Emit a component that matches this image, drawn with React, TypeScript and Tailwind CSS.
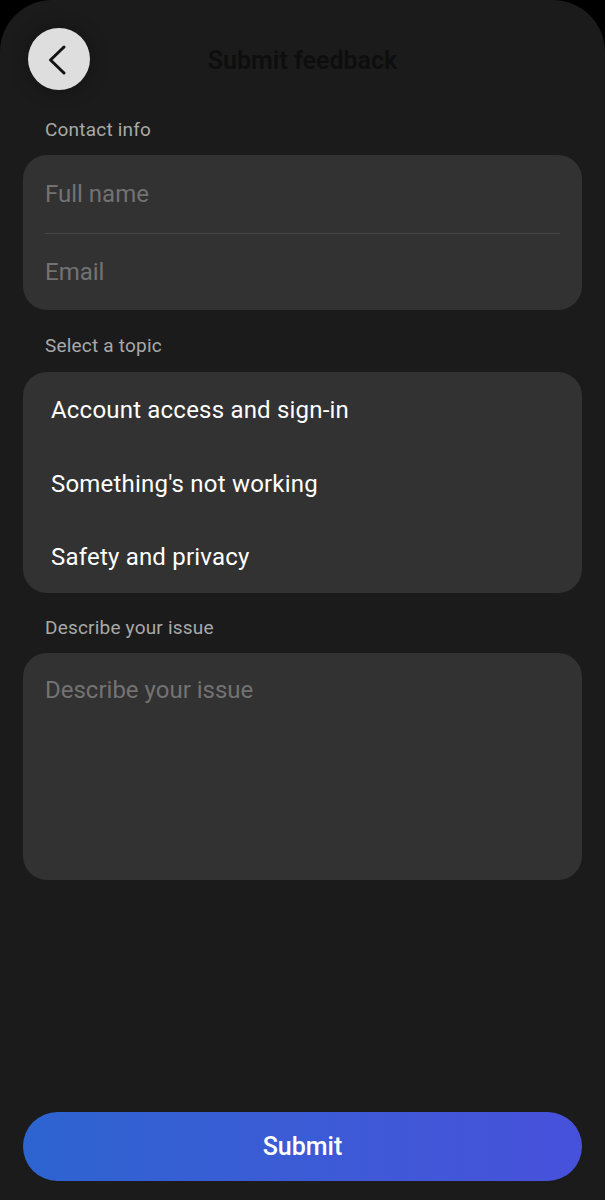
const topics = [
  "Account access and sign-in",
  "Something's not working",
  "Safety and privacy",
];

function SectionLabel({ children }: { children: React.ReactNode }) {
  return (
    <div className="px-[45px] text-[19px] leading-[20px] tracking-[0.2px] text-[#a9a9a9]">
      {children}
    </div>
  );
}

export default function App() {
  return (
    <div
      className="min-h-[1200px] w-[605px] bg-black"
      style={{ fontFamily: "Roboto, 'Noto Sans', sans-serif" }}
    >
      <div className="flex h-[1200px] flex-col rounded-t-[52px] bg-[#1b1b1b]">
        {/* header */}
        <div className="relative flex h-[120px] items-center justify-center">
          <button
            type="button"
            className="absolute left-[28px] top-[28px] flex h-[62px] w-[62px] items-center justify-center rounded-full bg-[#dedede] shadow-[0_0_18px_rgba(0,0,0,0.35)]"
          >
            <svg width="62" height="62" viewBox="0 0 62 62" fill="none">
              <polyline
                points="36,19 22.5,32 36,45"
                stroke="#121212"
                strokeWidth="3"
                strokeLinecap="round"
                strokeLinejoin="round"
              />
            </svg>
          </button>
          <h1 className="text-[25px] font-semibold leading-none text-[#0e0e0e]">
            Submit feedback
          </h1>
        </div>

        {/* contact info */}
        <SectionLabel>Contact info</SectionLabel>
        <div className="mx-[23px] mt-[15px] rounded-[24px] bg-[#323232]">
          <div className="flex h-[78px] items-center px-[22px] text-[24px] text-[#727272]">
            Full name
          </div>
          <div className="mx-[22px] h-px bg-[#474747]" />
          <div className="flex h-[76px] items-center px-[22px] text-[24px] text-[#727272]">
            Email
          </div>
        </div>

        {/* topic */}
        <div className="mt-[26px]">
          <SectionLabel>Select a topic</SectionLabel>
        </div>
        <div className="mx-[23px] mt-[16px] flex h-[221px] flex-col justify-center rounded-[24px] bg-[#323232] px-[28px]">
          {topics.map((t) => (
            <div
              key={t}
              className="flex h-[74px] items-center pt-[2px] text-[24px] tracking-[0.2px] text-white"
            >
              {t}
            </div>
          ))}
        </div>

        {/* description */}
        <div className="mt-[25px]">
          <SectionLabel>Describe your issue</SectionLabel>
        </div>
        <div className="mx-[23px] mt-[15px] h-[227px] rounded-[24px] bg-[#323232] px-[22px] pt-[23px] text-[24px] leading-[28px] text-[#727272]">
          Describe your issue
        </div>

        <div className="flex-1" />

        <div className="px-[23px] pb-[19px]">
          <button
            type="button"
            className="flex h-[69px] w-full items-center justify-center rounded-full bg-gradient-to-r from-[#2c64d0] to-[#4751db] text-[25px] font-medium text-white"
          >
            Submit
          </button>
        </div>
      </div>
    </div>
  );
}
